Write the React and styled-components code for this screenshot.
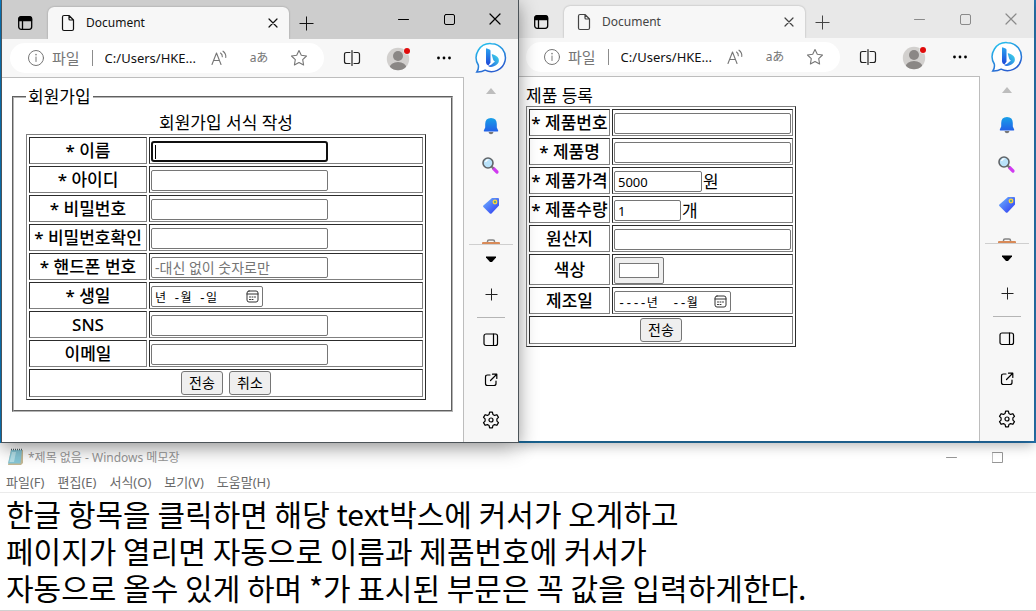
import React, { useId } from 'react';
import styled, { createGlobalStyle } from 'styled-components';

const UI_FONT = '"Noto Sans", "Noto Sans CJK KR", sans-serif';

const GlobalStyle = createGlobalStyle`
  *, *::before, *::after { box-sizing: border-box; }
  body { margin: 0; background: #fff; font-family: ${UI_FONT}; color: #000; }
  button, input, textarea { font-family: inherit; }
  svg { display: block; flex: none; }
`;

/* ---------- desktop and browser frame ---------- */

const Desktop = styled.main`
  overflow: hidden;
`;

const Windows = styled.div`
  display: grid;
  grid-template-columns: 1fr 1fr;
  align-items: start;
  padding: 0 2px 1px;
  background: linear-gradient(90deg, #0a84d0, #0a84d0 10%, #2577aa 60%, #2878b4);
`;

const Window = styled.section`
  position: relative;
  z-index: ${(p) => (p.$active ? 1 : 0)};
  min-width: 0;
  background: #f7f7f7;
  box-shadow: ${(p) =>
    p.$active
      ? '0 0 0 1px #4c5358, 0 5px 18px rgba(0, 0, 0, 0.45)'
      : '0 4px 12px rgba(0, 0, 0, 0.3)'};
`;

const TabStrip = styled.header`
  display: flex;
  align-items: flex-end;
  height: ${(p) => (p.$active ? 39 : 38)}px;
  background: ${(p) => (p.$active ? '#cdcdcd' : '#e8e8e8')};
  color: ${(p) => (p.$active ? '#111' : '#444')};
`;

const IconButton = styled.button`
  display: flex;
  align-items: center;
  justify-content: center;
  flex: none;
  width: ${(p) => p.$w || 46}px;
  height: ${(p) => p.$h || 32}px;
  padding: 0;
  border: 0;
  background: none;
  color: ${(p) => p.$color || 'inherit'};
`;

const Tab = styled.div`
  display: flex;
  align-items: center;
  flex: 0 1 241px;
  height: 32px;
  padding: 0 6px 0 13px;
  border-radius: 6px 6px 0 0;
  background: #f7f7f7;
  box-shadow: 0 0 2px rgba(0, 0, 0, 0.3);
  clip-path: inset(-3px -3px 0 -3px);
  font-size: 12px;
`;

const TabTitle = styled.span`
  flex: 1;
  padding-left: 11px;
  line-height: 20px;
`;

const WindowControls = styled.div`
  display: flex;
  align-self: flex-start;
  margin-left: auto;
  padding-top: 3px;
  color: ${(p) => (p.$active ? '#000' : '#8a8a8a')};
`;

const Toolbar = styled.div`
  display: flex;
  align-items: center;
  height: 38px;
  padding: 0 3px 0 8px;
`;

const AddressBar = styled.div`
  display: flex;
  align-items: center;
  flex: 1;
  min-width: 0;
  height: 30px;
  margin-right: 5px;
  padding: 0 5px 0 17px;
  border-radius: 15px;
  background: #fff;
  color: #767676;
`;

const Scheme = styled.span`
  padding: 0 12px 0 7px;
  font-size: 15px;
  line-height: 20px;
  white-space: nowrap;
`;

const UrlInput = styled.input`
  flex: 1;
  min-width: 0;
  height: 16px;
  padding: 0 0 0 12px;
  border: 0;
  border-left: 1px solid #8c8c8c;
  background: none;
  color: #111;
  font-size: 13px;
  line-height: 16px;
  outline: none;
`;

const Body = styled.div`
  display: flex;
`;

const Page = styled.div`
  flex: 1;
  min-width: 0;
  padding: 8px;
  border-top: 1px solid #bdbdbd;
  border-right: 1px solid #bdbdbd;
  background: #fff;
  font-size: 17px;
  line-height: 21px;
`;

const Sidebar = styled.aside`
  display: flex;
  flex-direction: column;
  align-items: center;
  width: 54px;
  padding: 1px 0 2px;
`;

const SideScroll = styled.div`
  display: flex;
  flex-direction: column;
  align-items: center;
  width: 44px;
  height: 167px;
  overflow: hidden;
  border-bottom: 1px solid #cfcfcf;
`;

const SideRule = styled.hr`
  width: 28px;
  margin: 2px 0;
  border: 0;
  border-top: 1px solid #b5b5b5;
`;

/* ---------- forms inside the pages ---------- */

const Fieldset = styled.fieldset`
  margin: 0 2px;
  padding: 4px 12px 10px;
  border: 2px groove #b4b4b4;
`;

const Legend = styled.legend`
  padding: 0 2px;
  line-height: 22px;
`;

const Table = styled.table`
  width: ${(p) => p.$w}px;
  border: 1px solid;
  border-color: #808080 #2c2c2c #2c2c2c #808080;
  border-spacing: 2px;
  table-layout: fixed;
`;

const Caption = styled.caption`
  text-align: ${(p) => p.$align || 'center'};
  line-height: ${(p) => (p.$align ? 21 : 22)}px;
`;

const cell = `
  border: 1px solid;
  border-color: #2c2c2c #808080 #808080 #2c2c2c;
`;

const HeadCell = styled.th`
  ${cell}
  width: ${(p) => p.$w}px;
  height: 27px;
  padding: 0;
  font-weight: 500;
  line-height: 21px;
  white-space: nowrap;
`;

const DataCell = styled.td`
  ${cell}
  height: 27px;
  padding: 2px 1px 0;
`;

const ActionCell = styled.td`
  ${cell}
  height: 28px;
  padding: 1px;
`;

const Inline = styled.div`
  display: flex;
  align-items: center;
  gap: 1px;
  height: 21px;
`;

const Actions = styled.div`
  display: flex;
  justify-content: center;
  gap: 6px;
`;

const TextInput = styled.input`
  display: block;
  width: ${(p) => p.$w || 177}px;
  height: 21px;
  padding: 0 3px;
  border: 1px solid #767676;
  border-radius: 2px;
  background: #fff;
  color: #000;
  font-size: 13px;
  line-height: 17px;
  outline: none;
  &::placeholder { color: #757575; opacity: 1; font-size: 14px; }
`;

const FocusedInput = styled(TextInput)`
  border: 2px solid #101010;
  border-radius: 3px;
  background: linear-gradient(#000, #000) 2px center / 1px 14px no-repeat #fff;
`;

const DateBox = styled.div`
  display: flex;
  align-items: center;
  width: ${(p) => p.$w}px;
  height: 21px;
  padding: 0 3px;
  border: 1px solid #767676;
  border-radius: 2px;
`;

const DateText = styled.input`
  flex: 1;
  min-width: 0;
  height: 19px;
  padding: 0;
  border: 0;
  background: none;
  font-family: "Liberation Mono", "Noto Sans CJK KR", monospace;
  font-size: 12px;
  outline: none;
`;

const ColorInput = styled.input`
  display: block;
  width: 50px;
  height: 27px;
  margin: 0;
  padding: 1px 2px;
  border: 1px solid #767676;
  border-radius: 2px;
  background: #efefef;
  &::-webkit-color-swatch-wrapper { padding: 4px 2px; }
  &::-webkit-color-swatch { border: 1px solid #777; }
`;

const FormButton = styled.button`
  width: 42px;
  height: 24px;
  padding: 0;
  border: 1px solid #767676;
  border-radius: 3px;
  background: #efefef;
  color: #000;
  font-size: 14px;
  line-height: 20px;
`;

/* ---------- notepad ---------- */

const Notepad = styled.section`
  background: #fff;
`;

const NoteTitle = styled.header`
  display: flex;
  align-items: center;
  height: 28px;
  padding: 0 16px 0 7px;
  color: #969696;
  font-size: 12px;
`;

const NoteName = styled.span`
  flex: 1;
  padding-left: 4px;
`;

const NoteMenu = styled.nav`
  display: flex;
  gap: 13px;
  padding: 1px 6px 0;
  border-bottom: 1px solid #ebebeb;
`;

const MenuButton = styled.button`
  padding: 0;
  border: 0;
  background: none;
  color: #6a6a6a;
  font-size: 13px;
  line-height: 20px;
`;

const NoteText = styled.textarea`
  display: block;
  width: 100%;
  height: 118px;
  padding: 2px 6px;
  border: 0;
  border-bottom: 1px solid #d0d0d0;
  background: #fff;
  color: #000;
  font-family: "Noto Sans CJK KR", sans-serif;
  font-size: 30px;
  line-height: 37px;
  resize: none;
  overflow: hidden;
  outline: none;
`;

/* ---------- icons ---------- */

const Line = ({ w = 16, h = 16, sw = 1, children, ...rest }) => (
  <svg width={w} height={h} viewBox={`0 0 ${w} ${h}`} fill="none" stroke="currentColor"
    strokeWidth={sw} strokeLinecap="round" strokeLinejoin="round" aria-hidden="true" {...rest}>
    {children}
  </svg>
);

const TabMenuIcon = () => (
  <Line w={16} h={16} sw={1.3}>
    <rect x="1.7" y="1.7" width="13" height="12.6" rx="2.5" />
    <path d="M2 4V3.5Q2 2 4 2h8.5Q14.500 2 14.500 4v1.500H2z" fill="currentColor" />
    <path d="M5.500 5v9" />
  </Line>
);
const FileIcon = () => (
  <Line w={14} h={18} sw={1.2}>
    <path d="M3 1.500h5l4.500 4.500v9q0 1.500-1.500 1.500H3q-1.500 0-1.500-1.500V3Q1.500 1.500 3 1.500zM8 1.500V5q0 1 1 1h3.500" />
  </Line>
);
const CloseIcon = ({ size = 10 }) => (
  <Line w={size} h={size} sw={1.2}><path d={`M1 1L${size - 1} ${size - 1}M${size - 1} 1L1 ${size - 1}`} /></Line>
);
const PlusIcon = ({ size = 14 }) => (
  <Line w={size + 1} h={size + 1} sw={1} strokeLinecap="butt">
    <path d={`M${size / 2 + 0.5} 0.500v${size}M0.500 ${size / 2 + 0.5}h${size}`} />
  </Line>
);
const MinIcon = () => <Line w={11} h={11}><path d="M.5 5.500h10" /></Line>;
const MaxIcon = ({ r = 1.5 }) => <Line w={11} h={11}><rect x=".5" y=".5" width="10" height="10" rx={r} /></Line>;

const InfoIcon = () => (
  <Line w={18} h={18}>
    <circle cx="9" cy="9" r="7.500" />
    <path d="M9 8v4.500" /><path d="M9 5.500v.2" strokeWidth="1.500" />
  </Line>
);
const ReadAloudIcon = () => (
  <Line w={18} h={18} sw={1.1}>
    <path d="M2 15.500L6.500 4l4.500 11.500M3.600 11.500h5.900M10.500 4q2 1.300 1.800 3.800M13 2.200q3.200 2.300 2.800 6.300" />
  </Line>
);
const StarIcon = () => (
  <Line w={18} h={18} sw={1.1}>
    <path d="M9 1.500l2.300 4.800 5.200.7-3.800 3.700.9 5.300L9 13.500 4.400 16l.9-5.300L1.500 7l5.200-.7z" />
  </Line>
);
const SplitIcon = () => (
  <Line w={18} h={18} sw={1.2}>
    <path d="M7 3.500H3.500Q1.500 3.500 1.500 5.500v7q0 2 2 2H7M11 3.500h3.500q2 0 2 2v7q0 2-2 2H11M9 1.500v15" />
  </Line>
);
const AvatarIcon = () => {
  const id = useId();
  return (
    <svg width="24" height="26" viewBox="0 0 24 26" aria-hidden="true">
      <clipPath id={id}><circle cx="12" cy="14" r="11.200" /></clipPath>
      <circle cx="12" cy="14" r="11.200" fill="#d2d0ce" />
      <g fill="#8a8785" clipPath={`url(#${id})`}>
        <circle cx="12" cy="11" r="5" /><ellipse cx="12" cy="23" rx="8.500" ry="6" />
      </g>
      <circle cx="21" cy="6" r="3.500" fill="#f7f7f7" />
      <circle cx="21" cy="6" r="3" fill="#e00b0b" />
    </svg>
  );
};
const DotsIcon = () => (
  <svg width="16" height="4" viewBox="0 0 16 4" aria-hidden="true">
    <circle cx="2.500" cy="2" r="1.400" /><circle cx="8" cy="2" r="1.400" /><circle cx="13.500" cy="2" r="1.400" />
  </svg>
);
const BingIcon = () => {
  const id = useId();
  return (
    <svg width="32" height="32" viewBox="0 0 32 32" aria-hidden="true">
      <defs>
        <linearGradient id={`${id}a`} x1="0" y1="0" x2=".5" y2="1">
          <stop offset="0" stopColor="#25c8f0" /><stop offset="1" stopColor="#2a5fd0" />
        </linearGradient>
        <linearGradient id={`${id}b`} x1="0" y1="0" x2="0" y2="1">
          <stop offset="0" stopColor="#2aa5f0" /><stop offset="1" stopColor="#1d45d8" />
        </linearGradient>
        <linearGradient id={`${id}c`} x1="1" y1="0" x2="0" y2="1">
          <stop offset="0" stopColor="#40dcea" /><stop offset="1" stopColor="#2460e0" />
        </linearGradient>
      </defs>
      <path d="M16.500 1.700a14 14 0 1 1-6.400 26.500q-3.400 2-8.300 1.800 2.200-3 1.500-7A14 14 0 0 1 16.500 1.700z"
        fill="#fff" stroke={`url(#${id}a)`} strokeWidth="1.500" />
      <path d="M11 7q0-1 1-.6l2.500 1q1 .4 1 1.500v11.800l-2.200 2.900Q11 22.500 11 20.500z" fill={`url(#${id}b)`} />
      <path d="M16.700 12.500q.2-.5.900-.2 6.700 2.200 6.300 6.700-.5 3.500-5 5.200-3.800 1.700-6-.5 3 .2 5.800-3.200l1.300-.8q-1.500-.8-1.900-2.200z"
        fill={`url(#${id}c)`} />
    </svg>
  );
};
const TriangleIcon = ({ up }) => (
  <svg width="12" height="8" viewBox="0 0 12 8" aria-hidden="true">
    <path d={up ? 'M1 6L6 0l5 6z' : 'M1 1.500h10v1L7 7H5L1 2.500z'} fill={up ? '#bdbdbd' : '#000'} />
  </svg>
);
const BellIcon = () => {
  const id = useId();
  return (
    <svg width="18" height="18" viewBox="0 0 18 18" aria-hidden="true">
      <linearGradient id={id} x1="0" y1="0" x2="0" y2="1">
        <stop offset="0" stopColor="#18a0e8" /><stop offset="1" stopColor="#2260e8" />
      </linearGradient>
      <path d="M6.500 15h5q-.5 2.300-2.500 2.300T6.500 15z" fill="#777" />
      <path d="M9 1q5.800 0 5.800 6v3.500l1.400 3q.3 1-.7 1h-13q-1 0-.7-1l1.400-3V7Q3.200 1 9 1z" fill={`url(#${id})`} />
    </svg>
  );
};
const SearchIcon = () => (
  <svg width="18" height="18" viewBox="0 0 18 18" aria-hidden="true">
    <path d="M11.500 11.500l3.500 3.500" stroke="#d03bf0" strokeWidth="3.200" strokeLinecap="round" />
    <path d="M9.500 9.500l2 2" stroke="#777" strokeWidth="2" />
    <circle cx="6" cy="6" r="5" fill="#b9e2fa" stroke="#606468" strokeWidth="1.600" />
    <path d="M3.500 5q1-2.300 3-2.300" stroke="#fff" strokeWidth="1.300" fill="none" />
  </svg>
);
const TagIcon = () => {
  const id = useId();
  return (
    <svg width="18" height="18" viewBox="0 0 18 18" aria-hidden="true">
      <linearGradient id={id} x1="0" y1="0" x2="1" y2="1">
        <stop offset="0" stopColor="#70b8ff" /><stop offset="1" stopColor="#2c35f0" />
      </linearGradient>
      <path d="M10 1h6q1 0 1 1v6.500L9.500 16.500q-.8.700-1.600 0l-6.500-6.400q-.8-.8 0-1.600z" fill={`url(#${id})`} />
      <circle cx="13" cy="5" r="1.800" fill="#5a8" stroke="#ffd33a" strokeWidth="1.300" />
    </svg>
  );
};
const BagIcon = () => (
  <svg width="18" height="14" viewBox="0 0 18 14" aria-hidden="true">
    <path d="M5.500 4V2.500Q5.500 1 7 1h4q1.500 0 1.500 1.500V4" fill="none" stroke="#858585" strokeWidth="1.500" />
    <rect y="3" width="18" height="10.500" rx="1" fill="#d88a58" />
  </svg>
);
const PanelIcon = () => (
  <Line w={16} h={14} sw={1.2}><rect x="1" y="1" width="13.500" height="11.500" rx="2" /><path d="M10.500 1v11.500" /></Line>
);
const OpenIcon = () => (
  <Line w={14} h={14} sw={1.2}><path d="M6 2H3.500Q1.500 2 1.500 4v6.500q0 2 2 2H10q2 0 2-2V8M8.500 1.200h4.300v4.300M12.500 1.500L6.500 7.500" /></Line>
);
const GearIcon = () => (
  <Line w={18} h={18} sw={1.2}>
    <path d="M7.600 1.200h2.800l.5 2.200 1.700 1 2.200-.7 1.700 2.600-1.600 1.600v2.200l1.600 1.600-1.700 2.600-2.200-.7-1.700 1-.5 2.200H7.600l-.5-2.200-1.700-1-2.200.7-1.700-2.600 1.600-1.600V7.900L1.500 6.300l1.700-2.600 2.200.7 1.700-1z" />
    <circle cx="9" cy="9" r="2" />
  </Line>
);
const CalendarIcon = () => (
  <Line w={13} h={13}>
    <rect x="1" y="1" width="11" height="11" rx="2" /><path d="M1 4h11" />
    <path d="M3.500 7h1M6 7h1M8.500 7h1M3.500 9.500h1M6 9.500h1" />
  </Line>
);
const NoteIcon = () => (
  <svg width="17" height="18" viewBox="0 0 17 18" aria-hidden="true">
    <path d="M4 2h12v13l-2 2H1z" fill="#c4b894" />
    <path d="M4 2h11l-1.500 13.500H1z" fill="#86c6d6" />
    <path d="M5 4h4L7 14H2.500z" fill="#b5e0e8" />
    <path d="M4 1.500h11" stroke="#4a6066" strokeWidth="1.500" strokeDasharray="1 1" />
  </svg>
);

const LangGlyph = styled.span`
  font-size: 12px;
  line-height: 18px;
`;

/* ---------- composition ---------- */

function Browser({ active, children }) {
  return (
    <Window $active={active}>
      <TabStrip $active={active}>
        <IconButton $color="#000" aria-label="탭 작업 메뉴"><TabMenuIcon /></IconButton>
        <Tab>
          <FileIcon />
          <TabTitle>Document</TabTitle>
          <IconButton $w={20} $h={20} aria-label="탭 닫기"><CloseIcon /></IconButton>
        </Tab>
        <IconButton $w={34} aria-label="새 탭"><PlusIcon /></IconButton>
        <WindowControls $active={active}>
          <IconButton aria-label="최소화"><MinIcon /></IconButton>
          <IconButton aria-label="최대화"><MaxIcon /></IconButton>
          <IconButton aria-label="닫기"><CloseIcon size={12} /></IconButton>
        </WindowControls>
      </TabStrip>
      <Toolbar>
        <AddressBar>
          <InfoIcon />
          <Scheme>파일</Scheme>
          <UrlInput aria-label="주소" defaultValue="C:/Users/HKE..." />
          <IconButton $w={40} $h={30} aria-label="소리내어 읽기"><ReadAloudIcon /></IconButton>
          <IconButton $w={40} $h={30} aria-label="번역"><LangGlyph>aあ</LangGlyph></IconButton>
          <IconButton $w={40} $h={30} aria-label="즐겨찾기"><StarIcon /></IconButton>
        </AddressBar>
        <IconButton $color="#222" aria-label="화면 분할"><SplitIcon /></IconButton>
        <IconButton aria-label="프로필"><AvatarIcon /></IconButton>
        <IconButton aria-label="설정 및 기타"><DotsIcon /></IconButton>
        <IconButton $w={48} aria-label="Bing"><BingIcon /></IconButton>
      </Toolbar>
      <Body>
        <Page>{children}</Page>
        <Sidebar>
          <SideScroll>
            <IconButton $w={44} $h={28} aria-label="위로"><TriangleIcon up /></IconButton>
            <IconButton $w={44} $h={40} aria-label="알림"><BellIcon /></IconButton>
            <IconButton $w={44} $h={40} aria-label="검색"><SearchIcon /></IconButton>
            <IconButton $w={44} $h={40} aria-label="쇼핑"><TagIcon /></IconButton>
            <IconButton $w={44} $h={40} aria-label="도구"><BagIcon /></IconButton>
          </SideScroll>
          <IconButton $w={44} $h={28} aria-label="아래로"><TriangleIcon /></IconButton>
          <IconButton $w={44} $h={42} $color="#222" aria-label="추가"><PlusIcon size={12} /></IconButton>
          <SideRule />
          <IconButton $w={44} $h={40} aria-label="사이드바"><PanelIcon /></IconButton>
          <IconButton $w={44} $h={40} aria-label="새 창에서 열기"><OpenIcon /></IconButton>
          <IconButton $w={44} $h={40} aria-label="설정"><GearIcon /></IconButton>
        </Sidebar>
      </Body>
    </Window>
  );
}

const Row = ({ id, label, w, children }) => (
  <tr>
    <HeadCell scope="row" $w={w}><label htmlFor={id}>{label}</label></HeadCell>
    <DataCell>{children}</DataCell>
  </tr>
);

const DateField = ({ id, w, text }) => (
  <DateBox $w={w}>
    <DateText id={id} defaultValue={text} />
    <IconButton type="button" $w={13} $h={15} $color="#333" aria-label="달력"><CalendarIcon /></IconButton>
  </DateBox>
);

const stop = (e) => e.preventDefault();

function JoinForm() {
  const W = 118;
  return (
    <form onSubmit={stop}>
      <Fieldset>
        <Legend>회원가입</Legend>
        <Table $w={400}>
          <Caption>회원가입 서식 작성</Caption>
          <tbody>
            <Row id="name" w={W} label="* 이름"><FocusedInput id="name" required /></Row>
            <Row id="uid" w={W} label="* 아이디"><TextInput id="uid" required /></Row>
            <Row id="pw" w={W} label="* 비밀번호"><TextInput id="pw" type="password" required /></Row>
            <Row id="pw2" w={W} label="* 비밀번호확인"><TextInput id="pw2" type="password" required /></Row>
            <Row id="tel" w={W} label="* 핸드폰 번호"><TextInput id="tel" type="tel" placeholder="-대신 없이 숫자로만" required /></Row>
            <Row id="birth" w={W} label="* 생일"><DateField id="birth" w={112} text="년 -월 -일" /></Row>
            <Row id="sns" w={W} label="SNS"><TextInput id="sns" /></Row>
            <Row id="mail" w={W} label="이메일"><TextInput id="mail" type="email" /></Row>
            <tr>
              <ActionCell colSpan={2}>
                <Actions>
                  <FormButton type="submit">전송</FormButton>
                  <FormButton type="reset">취소</FormButton>
                </Actions>
              </ActionCell>
            </tr>
          </tbody>
        </Table>
      </Fieldset>
    </form>
  );
}

function ProductForm() {
  const W = 81;
  return (
    <form onSubmit={stop}>
      <Table $w={270}>
        <Caption $align="left">제품 등록</Caption>
        <tbody>
          <Row id="pno" w={W} label="* 제품번호"><TextInput id="pno" required /></Row>
          <Row id="pname" w={W} label="* 제품명"><TextInput id="pname" required /></Row>
          <Row id="price" w={W} label="* 제품가격"><Inline><TextInput id="price" $w={88} defaultValue="5000" required />원</Inline></Row>
          <Row id="qty" w={W} label="* 제품수량"><Inline><TextInput id="qty" $w={67} defaultValue="1" required />개</Inline></Row>
          <Row id="origin" w={W} label="원산지"><TextInput id="origin" /></Row>
          <Row id="color" w={W} label="색상"><ColorInput id="color" type="color" defaultValue="#ffffff" /></Row>
          <Row id="made" w={W} label="제조일"><DateField id="made" w={117} text="----년  --월" /></Row>
          <tr>
            <ActionCell colSpan={2}>
              <Actions><FormButton type="submit">전송</FormButton></Actions>
            </ActionCell>
          </tr>
        </tbody>
      </Table>
    </form>
  );
}

const MENU = ['파일(F)', '편집(E)', '서식(O)', '보기(V)', '도움말(H)'];
const NOTE = [
  '한글 항목을 클릭하면 해당 text박스에 커서가 오게하고',
  '페이지가 열리면 자동으로 이름과 제품번호에 커서가',
  '자동으로 올수 있게 하며 *가 표시된 부문은 꼭 값을 입력하게한다.',
].join('\n');

export default function App() {
  return (
    <Desktop>
      <GlobalStyle />
      <Windows>
        <Browser active><JoinForm /></Browser>
        <Browser><ProductForm /></Browser>
      </Windows>
      <Notepad>
        <NoteTitle>
          <NoteIcon />
          <NoteName>*제목 없음 - Windows 메모장</NoteName>
          <IconButton $h={28} aria-label="최소화"><MinIcon /></IconButton>
          <IconButton $h={28} aria-label="최대화"><MaxIcon r={0} /></IconButton>
        </NoteTitle>
        <NoteMenu>
          {MENU.map((m) => <MenuButton key={m}>{m}</MenuButton>)}
        </NoteMenu>
        <NoteText aria-label="메모" defaultValue={NOTE} spellCheck={false} />
      </Notepad>
    </Desktop>
  );
}
